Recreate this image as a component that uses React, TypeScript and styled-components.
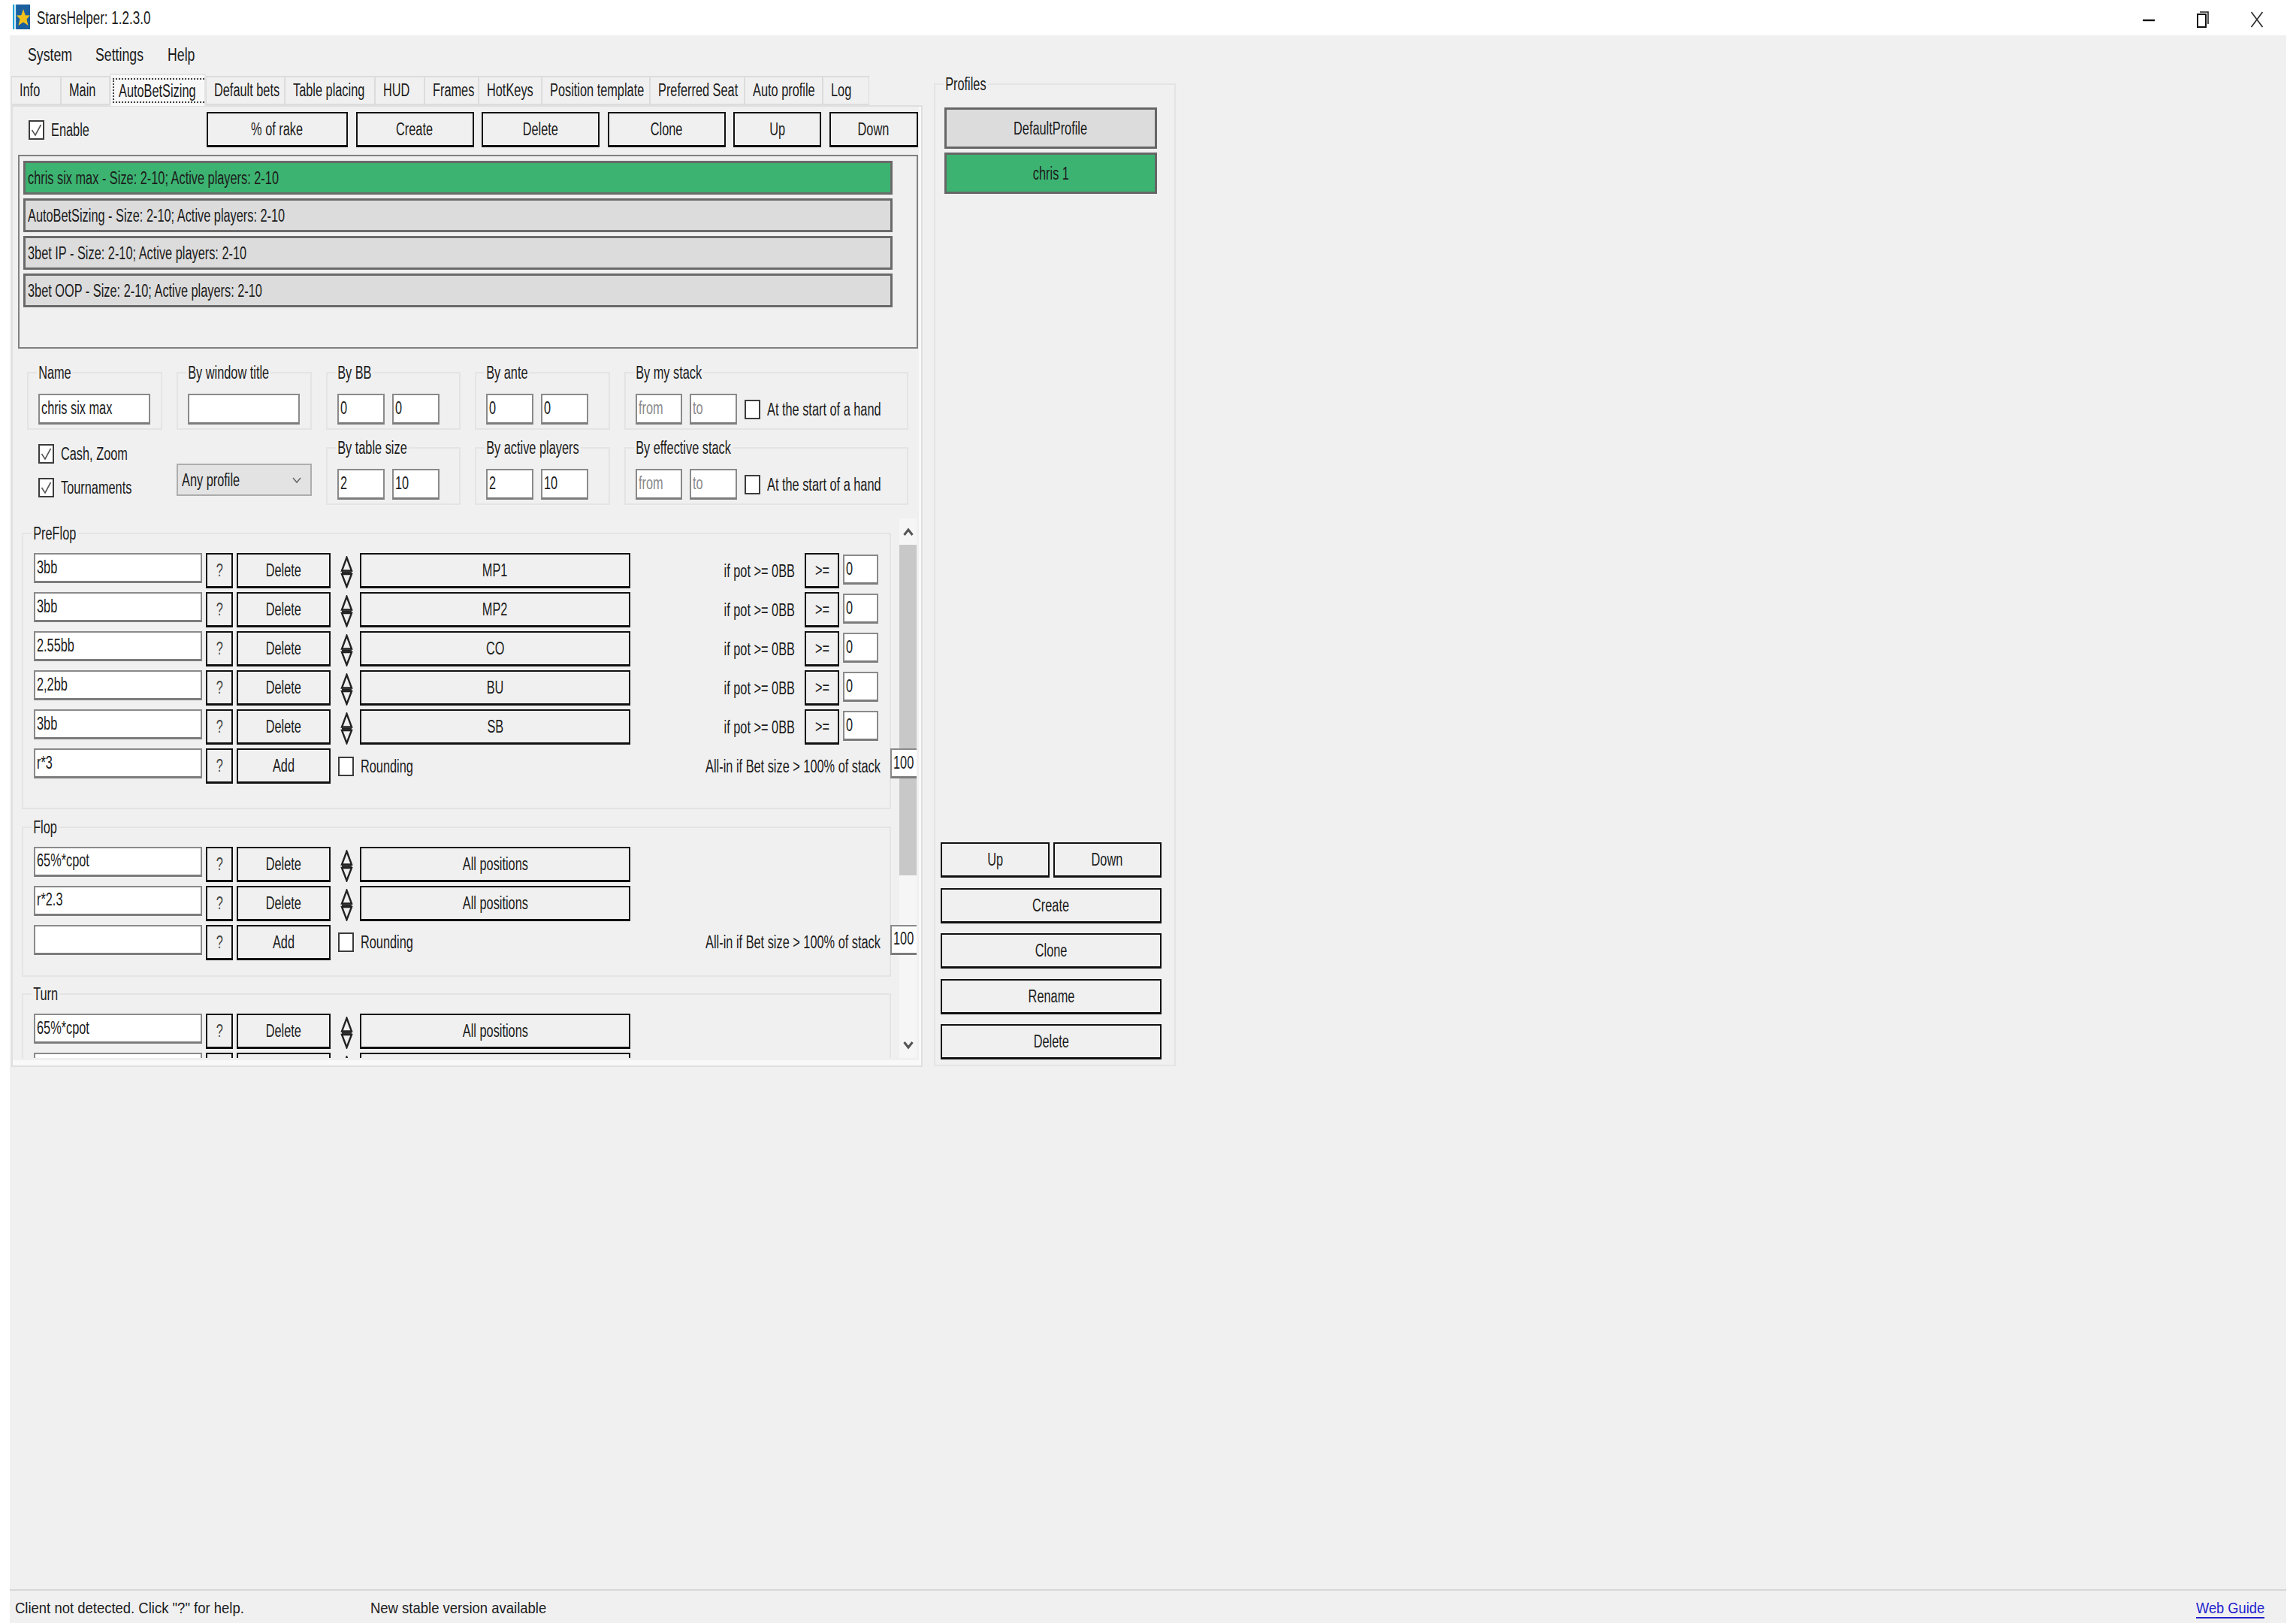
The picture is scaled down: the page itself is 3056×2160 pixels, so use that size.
import React from "react";
import styled, { createGlobalStyle } from "styled-components";

const Global = createGlobalStyle`
  * { box-sizing: border-box; }
  html, body { margin: 0; padding: 0; background: #fff; }
  body { font-family: "Liberation Sans", Arial, sans-serif; color: #1c1c1c; }
`;

const T = styled.span<{ $sx?: number; $o?: string; $size?: number; $color?: string }>`
  display: inline-block;
  white-space: nowrap;
  font-size: ${(p) => p.$size ?? 23}px;
  line-height: 28px;
  color: ${(p) => p.$color ?? "#1c1c1c"};
  transform: scaleX(${(p) => p.$sx ?? 0.71});
  transform-origin: ${(p) => p.$o ?? "left"} center;
`;

const Page = styled.div`
  width: 3056px;
  height: 2160px;
  display: flex;
  flex-direction: column;
  overflow: hidden;
  background: #fff;
`;
const TitleBar = styled.header`
  height: 47px;
  flex: none;
  display: flex;
  align-items: flex-start;
  padding: 6px 44px 0 17px;
  gap: 9px;
`;
const TitleText = styled.div`
  padding-top: 4px;
`;
const WinControls = styled.div`
  margin-left: auto;
  padding-top: 4px;
  display: flex;
  gap: 56px;
`;
const Client = styled.div`
  flex: 1;
  margin: 0 13px;
  background: #f0f0f0;
  display: flex;
  flex-direction: column;
  min-height: 0;
`;
const MenuBar = styled.nav`
  height: 51px;
  flex: none;
  display: flex;
  align-items: center;
  padding-left: 24px;
`;
const MenuItem = styled.div<{ $w: number }>`
  width: ${(p) => p.$w}px;
`;
const Main = styled.div`
  display: flex;
  padding-left: 2px;
  align-items: flex-start;
`;
const LeftCol = styled.div`
  width: 1213px;
  flex: none;
`;
const Tabs = styled.div`
  height: 42px;
  display: flex;
  align-items: flex-end;
  position: relative;
  z-index: 1;
`;
const Tab = styled.div<{ $w: number; $active?: boolean }>`
  width: ${(p) => p.$w}px;
  flex: none;
  height: ${(p) => (p.$active ? 43 : 39)}px;
  margin-bottom: ${(p) => (p.$active ? -1 : 0)}px;
  border: 2px solid ${(p) => (p.$active ? "#e4e4e4" : "#dcdcdc")};
  border-bottom: ${(p) => (p.$active ? "none" : "2px solid #dcdcdc")};
  border-left-width: ${(p) => (p.$active ? 2 : 1)}px;
  border-right-width: ${(p) => (p.$active ? 2 : 1)}px;
  background: ${(p) => (p.$active ? "#f8f8f8" : "#f0f0f0")};
  padding: ${(p) => (p.$active ? "4px 2px 4px" : "3px 0 0 10px")};
  display: flex;
`;
const FocusBox = styled.div`
  flex: 1;
  border: 2px dotted #444;
  padding-left: 6px;
  display: flex;
  align-items: center;
`;
const Panel = styled.section`
  height: 1280px;
  border: 2px solid #dfdfdf;
  padding: 7px 0 0 7px;
  box-shadow: inset -3px -7px 0 #f9f9f9;
`;
const Toolbar = styled.div`
  display: flex;
  align-items: center;
  gap: 10.5px;
  height: 47px;
`;
const EnableSlot = styled.div`
  width: 240.5px;
  padding-left: 14px;
`;
const CheckRow = styled.label`
  display: flex;
  align-items: center;
  gap: 9px;
`;
const CheckBox = styled.span`
  width: 21px;
  height: 26px;
  flex: none;
  background: #fff;
  border: 2px solid #3c3c3c;
  display: flex;
  align-items: center;
  justify-content: center;
`;
const Btn = styled.button<{ $w?: number; $h?: number }>`
  width: ${(p) => (p.$w ? `${p.$w}px` : "auto")};
  height: ${(p) => p.$h ?? 47}px;
  flex: none;
  border: 2px solid #111;
  border-bottom-width: 3px;
  border-radius: 0;
  background: #f0f0f0;
  padding: 0;
  display: flex;
  align-items: center;
  justify-content: center;
  font-family: inherit;
`;
const ListBox = styled.div`
  margin-top: 10px;
  width: 1198px;
  height: 258px;
  border: 2px solid #808080;
  padding: 6px 32px 0 5px;
  display: flex;
  flex-direction: column;
  gap: 5px;
`;
const ListItem = styled.div<{ $on?: boolean }>`
  height: 45px;
  flex: none;
  border: 3px solid #6a6a6a;
  background: ${(p) => (p.$on ? "#3cb371" : "#dcdcdc")};
  padding-left: 3px;
  display: flex;
  align-items: center;
`;
const Filters = styled.div`
  margin: 31px 0 0 12px;
  display: flex;
  flex-direction: column;
  gap: 23px;
`;
const FilterRow = styled.div`
  display: flex;
  gap: 19px;
  height: 77px;
`;
const Group = styled.div<{ $w: number }>`
  position: relative;
  width: ${(p) => p.$w}px;
  height: 77px;
  flex: none;
  border: 2px solid #e4e4e4;
  padding: 22px 0 0 13px;
  display: flex;
  align-items: center;
  align-content: flex-start;
  gap: 10px;
`;
const Legend = styled.div<{ $top?: number; $left?: number; $sx?: number }>`
  position: absolute;
  top: ${(p) => p.$top ?? -15}px;
  left: ${(p) => p.$left ?? 11}px;
  padding: 0 3px;
  background: #f0f0f0;
  font-size: 23px;
  line-height: 28px;
  white-space: nowrap;
  transform: scaleX(${(p) => p.$sx ?? 0.71});
  transform-origin: left center;
`;
const Field = styled.div<{ $w: number; $h?: number; $mt?: number }>`
  width: ${(p) => p.$w}px;
  height: ${(p) => p.$h ?? 41}px;
  flex: none;
  margin-top: ${(p) => p.$mt ?? 0}px;
  background: #fff;
  border: 2px solid #8a8a8a;
  border-bottom: 3px solid #7c7c7c;
  padding: 0 0 2px 2px;
  display: flex;
  align-items: center;
  overflow: hidden;
`;
const CheckCol = styled.div`
  width: 180px;
  margin-top: -5px;
  padding-left: 15px;
  display: flex;
  flex-direction: column;
  gap: 17px;
`;
const SelectSlot = styled.div`
  width: 180px;
  height: 43px;
  margin-top: 22px;
  background: #e3e3e3;
  border: 2px solid #adadad;
  padding: 0 12px 0 5px;
  display: flex;
  align-items: center;
  justify-content: space-between;
  flex: none;
`;
const ScrollArea = styled.div`
  margin-top: 18px;
  height: 718px;
  width: 1196px;
  padding-left: 5px;
  display: flex;
  gap: 11px;
  overflow: hidden;
`;
const ScrollContent = styled.div`
  width: 1157px;
  flex: none;
  padding-top: 19px;
  display: flex;
  flex-direction: column;
  gap: 22.5px;
`;
const Section = styled.div<{ $h?: number }>`
  position: relative;
  flex: none;
  height: ${(p) => (p.$h ? `${p.$h}px` : "auto")};
  border: 2px solid #e4e4e4;
  padding: 25px 0 0 14px;
  display: flex;
  flex-direction: column;
  gap: 5px;
`;
const Row = styled.div`
  height: 47px;
  flex: none;
  display: flex;
  gap: 5px;
  align-items: flex-start;
`;
const UpDownSlot = styled.div`
  width: 29px;
  height: 47px;
  flex: none;
  padding: 4px 0 0 8px;
`;
const RightText = styled.div`
  flex: 1;
  height: 47px;
  padding-right: 8px;
  display: flex;
  align-items: center;
  justify-content: flex-end;
`;
const RightEnd = styled.div`
  padding-right: 15px;
  display: flex;
  gap: 5px;
  flex: 1;
`;
const RoundSlot = styled.div`
  width: 394px;
  height: 47px;
  flex: none;
  padding-left: 5px;
  display: flex;
  align-items: center;
`;
const Scrollbar = styled.div`
  width: 23px;
  flex: none;
  background: #f6f6f6;
  display: flex;
  flex-direction: column;
`;
const ScrollArrow = styled.div`
  height: 35px;
  flex: none;
  display: flex;
  align-items: center;
  justify-content: center;
`;
const ScrollThumb = styled.div`
  height: 440px;
  flex: none;
  background: #c8c8c8;
`;
const ScrollTrack = styled.div`
  flex: 1;
`;
const Profiles = styled.aside`
  position: relative;
  width: 322px;
  height: 1308px;
  flex: none;
  margin: 13px 0 0 15px;
  border: 2px solid #e4e4e4;
  padding: 30px 0 7px 7px;
  display: flex;
  flex-direction: column;
  justify-content: space-between;
`;
const ProfileList = styled.div`
  margin-left: 5px;
  width: 283px;
  display: flex;
  flex-direction: column;
  gap: 5px;
`;
const ProfileItem = styled.div<{ $on?: boolean }>`
  height: 55px;
  border: 3px solid #666;
  background: ${(p) => (p.$on ? "#3cb371" : "#dcdcdc")};
  display: flex;
  align-items: center;
  justify-content: center;
`;
const ProfileActions = styled.div`
  width: 294px;
  display: flex;
  flex-direction: column;
  gap: 13.5px;
`;
const ActionPair = styled.div`
  display: flex;
  gap: 5px;
`;
const StatusBar = styled.footer`
  margin-top: auto;
  height: 45px;
  flex: none;
  border-top: 2px solid #d7d7d7;
  padding: 3px 29px 0 7px;
  display: flex;
  align-items: center;
`;
const StatusCell = styled.div<{ $w: number }>`
  width: ${(p) => p.$w}px;
`;
const WebGuide = styled.a`
  margin-left: auto;
  width: 91px;
  color: #2222cc;
  text-decoration: none;
  border-bottom: 2px solid #2222cc;
  height: 28px;
  display: block;
`;

const Check = () => (
  <svg width="15" height="18" viewBox="0 0 15 18">
    <path d="M1.5 9 L6 16 L13.5 2" fill="none" stroke="#555" strokeWidth="1.6" />
  </svg>
);

const Tick = ({ on, label, size }: { on?: boolean; label: string; size?: number }) => (
  <CheckRow>
    <CheckBox>{on && <Check />}</CheckBox>
    <T $size={size}>{label}</T>
  </CheckRow>
);

const UpDown = () => (
  <svg width="17" height="43" viewBox="0 0 17 43">
    <path d="M8.5 2 L15 19.5 H2 Z M2 24 H15 L8.5 41 Z" fill="none" stroke="#222" strokeWidth="2.4" />
    <path d="M2 21.7 H15" stroke="#222" strokeWidth="2.4" />
  </svg>
);

const Logo = () => (
  <svg width="23" height="33" viewBox="0 0 23 33">
    <rect width="23" height="33" fill="#1c5f9e" />
    <rect width="2" height="33" fill="#1fa5d8" />
    <rect x="2" width="2" height="33" fill="#d7ecf5" />
    <rect x="4" width="2" height="33" fill="#1c6fae" />
    <path
      d="M14 6 L16.7 14.2 L23 14.6 L18.4 19.4 L20.6 28 L14 23.6 L7.4 28 L9.6 19.4 L5 14.6 L11.3 14.2 Z"
      fill="#f2c01d"
    />
  </svg>
);

const WinIcons = () => (
  <WinControls>
    <svg width="16" height="34" viewBox="0 0 16 34">
      <path d="M0 17 H16" stroke="#111" strokeWidth="2.4" />
    </svg>
    <svg width="16" height="34" viewBox="0 0 16 34">
      <path d="M4 6 H15 V22" fill="none" stroke="#222" strokeWidth="1.6" transform="translate(0 0)" />
      <rect x="1" y="9" width="11" height="17" fill="#fff" stroke="#111" strokeWidth="2" />
    </svg>
    <svg width="16" height="34" viewBox="0 0 16 34">
      <path d="M0.5 6 L15.5 26 M15.5 6 L0.5 26" stroke="#333" strokeWidth="1.8" />
    </svg>
  </WinControls>
);

const tabs = [
  ["Info", 66],
  ["Main", 65],
  ["AutoBetSizing", 128],
  ["Default bets", 105],
  ["Table placing", 120],
  ["HUD", 66],
  ["Frames", 72],
  ["HotKeys", 84],
  ["Position template", 144],
  ["Preferred Seat", 126],
  ["Auto profile", 104],
  ["Log", 62],
] as const;

const toolbar = [
  ["% of rake", 188],
  ["Create", 157],
  ["Delete", 157],
  ["Clone", 157],
  ["Up", 117],
  ["Down", 118],
] as const;

const items = [
  "chris six max -  Size: 2-10; Active players: 2-10",
  "AutoBetSizing -  Size: 2-10; Active players: 2-10",
  "3bet IP -  Size: 2-10; Active players: 2-10",
  "3bet OOP -  Size: 2-10; Active players: 2-10",
];

const Pair = ({ a, b, muted }: { a: string; b: string; muted?: boolean }) => (
  <>
    <Field $w={muted ? 62 : 63}>
      <T $color={muted ? "#8a8a8a" : undefined}>{a}</T>
    </Field>
    <Field $w={63}>
      <T $color={muted ? "#8a8a8a" : undefined}>{b}</T>
    </Field>
  </>
);

type BetProps = { value: string; label: string; action?: string; pot?: boolean };

const HelpBtn = () => (
  <Btn $w={36}>
    <T $o="center" $color="#444">?</T>
  </Btn>
);

const BetRow = ({ value, label, action = "Delete", pot }: BetProps) => (
  <Row>
    <Field $w={224} $h={40}>
      <T>{value}</T>
    </Field>
    <HelpBtn />
    <Btn $w={125}>
      <T $o="center">{action}</T>
    </Btn>
    <UpDownSlot>
      <UpDown />
    </UpDownSlot>
    <Btn $w={360}>
      <T $o="center">{label}</T>
    </Btn>
    {pot && (
      <RightEnd>
        <RightText>
          <T $o="right">if pot &gt;= 0BB</T>
        </RightText>
        <Btn $w={46}>
          <T $o="center">&gt;=</T>
        </Btn>
        <Field $w={47} $h={40} $mt={2}>
          <T>0</T>
        </Field>
      </RightEnd>
    )}
  </Row>
);

const AddRow = ({ value, limit }: { value: string; limit: string }) => (
  <Row>
    <Field $w={224} $h={40}>
      <T>{value}</T>
    </Field>
    <HelpBtn />
    <Btn $w={125}>
      <T $o="center">Add</T>
    </Btn>
    <RoundSlot>
      <Tick label="Rounding" />
    </RoundSlot>
    <RightEnd>
      <RightText>
        <T $o="right">All-in if Bet size &gt; 100% of stack</T>
      </RightText>
      <Field $w={47} $h={40}>
        <T>{limit}</T>
      </Field>
    </RightEnd>
  </Row>
);

const preflop = [
  ["3bb", "MP1"],
  ["3bb", "MP2"],
  ["2.55bb", "CO"],
  ["2,2bb", "BU"],
  ["3bb", "SB"],
];

export default function App() {
  return (
    <Page>
      <Global />
      <TitleBar>
        <Logo />
        <TitleText>
          <T $sx={0.74}>StarsHelper: 1.2.3.0</T>
        </TitleText>
        <WinIcons />
      </TitleBar>
      <Client>
        <MenuBar>
          <MenuItem $w={90}><T $sx={0.77}>System</T></MenuItem>
          <MenuItem $w={96}><T $sx={0.77}>Settings</T></MenuItem>
          <MenuItem $w={60}><T $sx={0.77}>Help</T></MenuItem>
        </MenuBar>
        <Main>
          <LeftCol>
            <Tabs>
              {tabs.map(([name, w]) =>
                name === "AutoBetSizing" ? (
                  <Tab key={name} $w={w} $active>
                    <FocusBox>
                      <T>{name}</T>
                    </FocusBox>
                  </Tab>
                ) : (
                  <Tab key={name} $w={w}>
                    <T>{name}</T>
                  </Tab>
                )
              )}
            </Tabs>
            <Panel>
              <Toolbar>
                <EnableSlot>
                  <Tick on label="Enable" />
                </EnableSlot>
                {toolbar.map(([name, w]) => (
                  <Btn key={name} $w={w}>
                    <T $o="center">{name}</T>
                  </Btn>
                ))}
              </Toolbar>
              <ListBox>
                {items.map((s, i) => (
                  <ListItem key={s} $on={i === 0}>
                    <T>{s}</T>
                  </ListItem>
                ))}
              </ListBox>
              <Filters>
                <FilterRow>
                  <Group $w={180}>
                    <Legend>Name</Legend>
                    <Field $w={149}><T>chris six max</T></Field>
                  </Group>
                  <Group $w={180}>
                    <Legend>By window title</Legend>
                    <Field $w={149} />
                  </Group>
                  <Group $w={179}>
                    <Legend>By BB</Legend>
                    <Pair a="0" b="0" />
                  </Group>
                  <Group $w={180}>
                    <Legend>By ante</Legend>
                    <Pair a="0" b="0" />
                  </Group>
                  <Group $w={378}>
                    <Legend>By my stack</Legend>
                    <Pair a="from" b="to" muted />
                    <Tick label="At the start of a hand" />
                  </Group>
                </FilterRow>
                <FilterRow>
                  <CheckCol>
                    <Tick on label="Cash, Zoom" />
                    <Tick on label="Tournaments" />
                  </CheckCol>
                  <SelectSlot>
                    <T>Any profile</T>
                    <svg width="12" height="10" viewBox="0 0 12 10">
                      <path d="M1 2 L6 8 L11 2" fill="none" stroke="#666" strokeWidth="1.5" />
                    </svg>
                  </SelectSlot>
                  <Group $w={179}>
                    <Legend>By table size</Legend>
                    <Pair a="2" b="10" />
                  </Group>
                  <Group $w={180}>
                    <Legend>By active players</Legend>
                    <Pair a="2" b="10" />
                  </Group>
                  <Group $w={378}>
                    <Legend>By effective stack</Legend>
                    <Pair a="from" b="to" muted />
                    <Tick label="At the start of a hand" />
                  </Group>
                </FilterRow>
              </Filters>
              <ScrollArea>
                <ScrollContent>
                  <Section $h={368}>
                    <Legend>PreFlop</Legend>
                    {preflop.map(([v, l]) => (
                      <BetRow key={l} value={v} label={l} pot />
                    ))}
                    <AddRow value="r*3" limit="100" />
                  </Section>
                  <Section $h={200}>
                    <Legend>Flop</Legend>
                    <BetRow value="65%*cpot" label="All positions" />
                    <BetRow value="r*2.3" label="All positions" />
                    <AddRow value="" limit="100" />
                  </Section>
                  <Section>
                    <Legend>Turn</Legend>
                    <BetRow value="65%*cpot" label="All positions" />
                    <BetRow value="" label="" action="" />
                  </Section>
                </ScrollContent>
                <Scrollbar>
                  <ScrollArrow>
                    <svg width="14" height="12" viewBox="0 0 14 12">
                      <path d="M1.5 10 L7 3 L12.5 10" fill="none" stroke="#555" strokeWidth="3" />
                    </svg>
                  </ScrollArrow>
                  <ScrollThumb />
                  <ScrollTrack />
                  <ScrollArrow>
                    <svg width="14" height="12" viewBox="0 0 14 12">
                      <path d="M1.5 2 L7 9 L12.5 2" fill="none" stroke="#555" strokeWidth="3" />
                    </svg>
                  </ScrollArrow>
                </Scrollbar>
              </ScrollArea>
            </Panel>
          </LeftCol>
          <Profiles>
            <Legend>Profiles</Legend>
            <ProfileList>
              <ProfileItem><T $o="center">DefaultProfile</T></ProfileItem>
              <ProfileItem $on><T $o="center">chris 1</T></ProfileItem>
            </ProfileList>
            <ProfileActions>
              <ActionPair>
                <Btn $w={144.5}><T $o="center">Up</T></Btn>
                <Btn $w={144.5}><T $o="center">Down</T></Btn>
              </ActionPair>
              <Btn><T $o="center">Create</T></Btn>
              <Btn><T $o="center">Clone</T></Btn>
              <Btn><T $o="center">Rename</T></Btn>
              <Btn><T $o="center">Delete</T></Btn>
            </ProfileActions>
          </Profiles>
        </Main>
        <StatusBar>
          <StatusCell $w={473}><T $size={21} $sx={0.88}>Client not detected. Click "?" for help.</T></StatusCell>
          <StatusCell $w={300}><T $size={21} $sx={0.88}>New stable version available</T></StatusCell>
          <WebGuide href="#"><T $size={21} $sx={0.87} $color="#2222cc">Web Guide</T></WebGuide>
        </StatusBar>
      </Client>
    </Page>
  );
}
